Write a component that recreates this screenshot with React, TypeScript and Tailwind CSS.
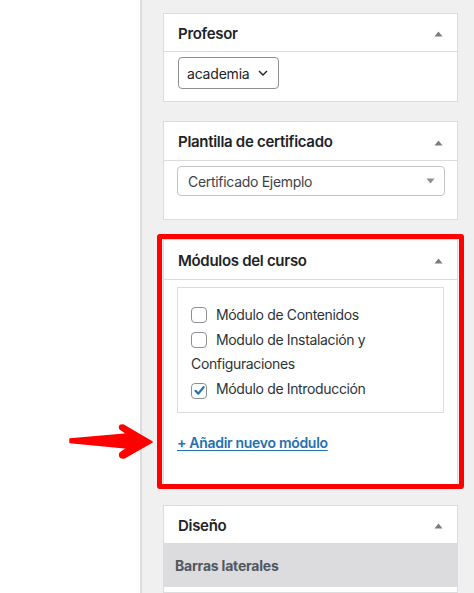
import React from "react";

const Tri = () => (
  <svg width="9" height="6" viewBox="0 0 9 6" className="block">
    <path d="M4.5 0.5 L8.5 5.5 L0.5 5.5 Z" fill="#787c82" />
  </svg>
);

const Check = ({ checked }: { checked?: boolean }) => (
  <span className="inline-flex align-[-3px] w-[16px] h-[16px] border border-[#8c8f94] rounded-[4px] bg-white items-center justify-center mr-[9px]">
    {checked && (
      <svg width="13" height="13" viewBox="0 0 13 13">
        <path d="M2.5 6.8 L5.3 9.6 L10.6 3.2" stroke="#2271b1" strokeWidth="2.2" fill="none" strokeLinecap="round" strokeLinejoin="round" />
      </svg>
    )}
  </span>
);

const Header = ({ title, h }: { title: string; h: string }) => (
  <div className={`flex items-center justify-between pl-[14px] pr-[14px] pt-[3px] border-b border-[#dcdcde] ${h}`}>
    <span className="text-[15px] font-semibold tracking-[-0.3px] text-[#1d2327]">{title}</span>
    <Tri />
  </div>
);

export default function App() {
  return (
    <div
      className="relative flex w-[474px] h-[593px] overflow-hidden bg-white text-[#1d2327]"
      style={{ fontFamily: "Inter, 'Noto Sans', sans-serif" }}
    >
      <div className="w-[142px] shrink-0 bg-white border-r-2 border-[#dcdcde]" />
      <div className="flex-1 bg-[#f0f0f1] pl-[21px] pr-[16px] pt-[13px] flex flex-col gap-[20px]">
        {/* Profesor */}
        <div className="bg-white border border-[#dcdcde]">
          <Header title="Profesor" h="h-[38px]" />
          <div className="pl-[14px] pt-[5px] pb-[12px]">
            <div className="w-[101px] h-[32px] border border-[#8c8f94] rounded-[4px] flex items-center justify-between pl-[8px] pr-[10px] text-[14px] tracking-[-0.2px]">
              <span>academia</span>
              <svg width="10" height="6" viewBox="0 0 10 6">
                <path d="M1 1 L5 5 L9 1" stroke="#1d2327" strokeWidth="1.4" fill="none" />
              </svg>
            </div>
          </div>
        </div>

        {/* Plantilla */}
        <div className="bg-white border border-[#dcdcde] -mt-[1px]">
          <Header title="Plantilla de certificado" h="h-[39px]" />
          <div className="pl-[13px] pr-[12px] pt-[5px] pb-[23px]">
            <div className="h-[30px] border border-[#c3c4c7] rounded-[4px] flex items-center justify-between pl-[10px] pr-[9px] text-[14px] tracking-[-0.3px] text-[#3c434a]">
              <span>Certificado Ejemplo</span>
              <svg width="9" height="6" viewBox="0 0 9 6">
                <path d="M0.5 0.5 L8.5 0.5 L4.5 5.5 Z" fill="#8c8f94" />
              </svg>
            </div>
          </div>
        </div>

        {/* Modulos */}
        <div className="relative bg-white border border-[#dcdcde] -mt-[1px]">
          <Header title="Módulos del curso" h="h-[40px]" />
          <div className="px-[13px] pt-[7px]">
            <div className="border border-[#dcdcde] h-[126px] pl-[13px] pr-[60px] pt-[15px] text-[14px] tracking-[-0.35px] leading-[24.7px] text-[#2c3338]">
              <label className="block">
                <Check />
                Módulo de Contenidos
              </label>
              <label className="block">
                <Check />
                Modulo de Instalación y Configuraciones
              </label>
              <label className="block">
                <Check checked />
                Módulo de Introducción
              </label>
            </div>
            <div className="pt-[19px] pb-[31px] leading-[20px]">
              <a className="text-[14px] font-semibold tracking-[-0.3px] text-[#2271b1] underline underline-offset-2 decoration-1">
                + Añadir nuevo módulo
              </a>
            </div>
          </div>
          <div className="absolute -left-[7px] -right-[7px] -top-[6px] -bottom-[5px] border-[5px] border-[#ff0000] rounded-[3px] pointer-events-none" />
        </div>

        {/* Diseño */}
        <div className="bg-white border border-[#dcdcde] flex-1">
          <Header title="Diseño" h="h-[38px]" />
          <div className="h-[43px] bg-[#dcdcde] flex items-center pl-[11px] text-[14px] font-bold tracking-[-0.2px] text-[#50575e]">
            Barras laterales
          </div>
        </div>
      </div>

      {/* Arrow */}
      <svg className="absolute left-0 top-0 pointer-events-none" width="474" height="593">
        <path
          d="M70 439 L127 434 L120 429 Q118 425 123 425 L152 442 L124 458 Q118 458 120 453 L127 448 L70 442.5 Z"
          fill="#ff0000"
          stroke="#ff0000"
          strokeWidth="1.5"
          strokeLinejoin="round"
        />
      </svg>
    </div>
  );
}
